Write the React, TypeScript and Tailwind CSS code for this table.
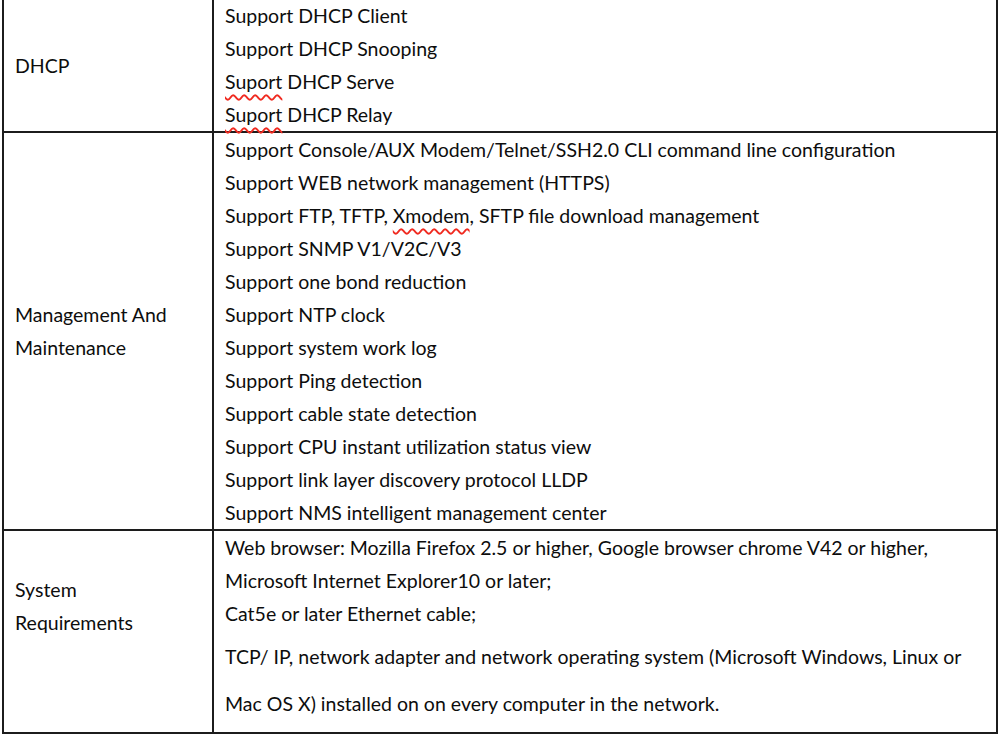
import type { ReactNode } from 'react';

function Typo({ children }: { children: ReactNode }) {
  return (
    <span className="underline decoration-wavy decoration-[#f02a20] decoration-[1.5px] underline-offset-[5px]">
      {children}
    </span>
  );
}

const management = [
  'Support Console/AUX Modem/Telnet/SSH2.0 CLI command line configuration',
  'Support WEB network management (HTTPS)',
  null,
  'Support SNMP V1/V2C/V3',
  'Support one bond reduction',
  'Support NTP clock',
  'Support system work log',
  'Support Ping detection',
  'Support cable state detection',
  'Support CPU instant utilization status view',
  'Support link layer discovery protocol LLDP',
  'Support NMS intelligent management center',
];

export default function App() {
  return (
    <div className="h-[735px] w-[1000px] bg-white font-['Lato','Noto_Sans',sans-serif] text-[19.5px] text-[#0d0d0d]">
      <div className="ml-[2px] w-[996px] border-x-2 border-b-2 border-[#1c1c1c]">
        {/* DHCP */}
        <div className="flex h-[133px] border-b-2 border-[#1c1c1c]">
          <div className="flex w-[210px] items-center border-r-2 border-[#1c1c1c] pl-[11px]">DHCP</div>
          <div className="flex-1 pl-[11px] leading-[33px]">
            <div className="-mt-px">Support DHCP Client</div>
            <div>Support DHCP Snooping</div>
            <div>
              <Typo>Suport</Typo> DHCP Serve
            </div>
            <div>
              <Typo>Suport</Typo> DHCP Relay
            </div>
          </div>
        </div>

        {/* Management */}
        <div className="flex h-[398px] border-b-2 border-[#1c1c1c]">
          <div className="flex w-[210px] items-center border-r-2 border-[#1c1c1c] pl-[11px] leading-[33px]">
            <div>
              Management And
              <br />
              Maintenance
            </div>
          </div>
          <div className="flex-1 pl-[11px] leading-[33px]">
            {management.map((line, i) =>
              line ? (
                <div key={i}>{line}</div>
              ) : (
                <div key={i}>
                  Support FTP, TFTP, <Typo>Xmodem</Typo>, SFTP file download management
                </div>
              ),
            )}
          </div>
        </div>

        {/* System requirements */}
        <div className="flex h-[201px]">
          <div className="w-[210px] border-r-2 border-[#1c1c1c] pl-[11px] pt-[42px] leading-[33px]">
            System
            <br />
            Requirements
          </div>
          <div className="flex-1 pl-[11px]">
            <div className="leading-[33px]">
              <div>Web browser: Mozilla Firefox 2.5 or higher, Google browser chrome V42 or higher,</div>
              <div>Microsoft Internet Explorer10 or later;</div>
              <div>Cat5e or later Ethernet cable;</div>
            </div>
            <div className="mt-[3px] leading-[47px]">
              <div>TCP/ IP, network adapter and network operating system (Microsoft Windows, Linux or</div>
              <div>Mac OS X) installed on on every computer in the network.</div>
            </div>
          </div>
        </div>
      </div>
    </div>
  );
}
